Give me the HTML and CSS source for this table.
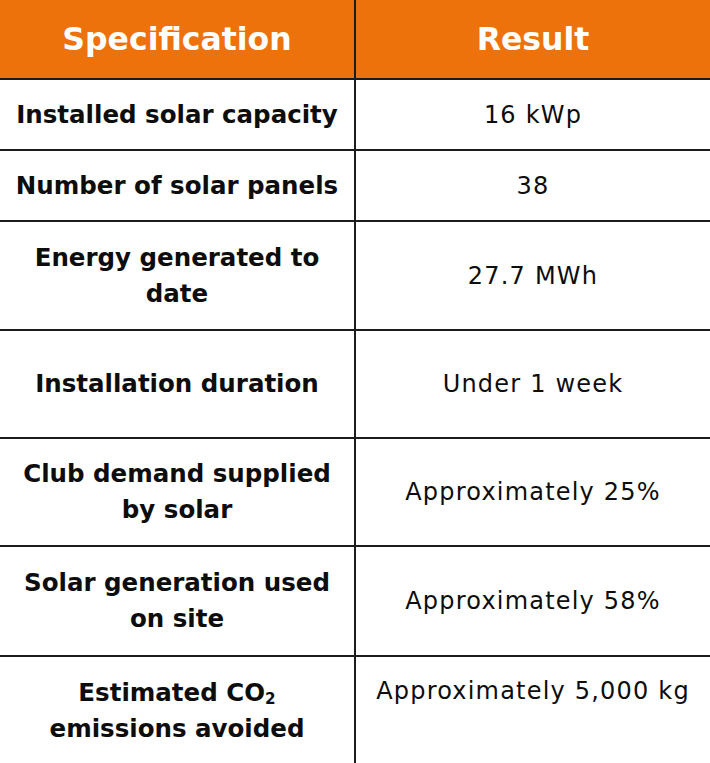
FILE: index.html
```html
<!DOCTYPE html>
<html lang="en">
<head>
<meta charset="utf-8">
<title>Solar results</title>
<link rel="stylesheet" href="styles.css">
</head>
<body>
<table class="spec-table">
  <colgroup><col class="col-spec"><col class="col-result"></colgroup>
  <thead>
    <tr class="row-head">
      <th>Specification</th>
      <th>Result</th>
    </tr>
  </thead>
  <tbody>
    <tr class="row-short">
      <td class="spec">Installed solar capacity</td>
      <td class="result">16 kWp</td>
    </tr>
    <tr class="row-short">
      <td class="spec">Number of solar panels</td>
      <td class="result">38</td>
    </tr>
    <tr class="row-tall row-tall-plus">
      <td class="spec">Energy generated to date</td>
      <td class="result">27.7 MWh</td>
    </tr>
    <tr class="row-tall">
      <td class="spec">Installation duration</td>
      <td class="result">Under 1 week</td>
    </tr>
    <tr class="row-tall">
      <td class="spec">Club demand supplied by solar</td>
      <td class="result">Approximately 25%</td>
    </tr>
    <tr class="row-tall row-tall-max">
      <td class="spec">Solar generation used on site</td>
      <td class="result">Approximately 58%</td>
    </tr>
    <tr class="row-tall">
      <td class="spec">Estimated CO<sub class="sub">2</sub> emissions avoided</td>
      <td class="result result-top">Approximately 5,000 kg</td>
    </tr>
  </tbody>
</table>
</body>
</html>
```
FILE: styles.css
```css
html, body {
  margin: 0;
  padding: 0;
  background: #ffffff;
}

.spec-table {
  width: 710px;
  table-layout: fixed;
  border-collapse: collapse;
  font-family: "DejaVu Sans", sans-serif;
  color: #0d0d0d;
}

.col-spec { width: 355px; }
.col-result { width: 355px; }

.spec-table th,
.spec-table td {
  padding: 0 12px;
  text-align: center;
  vertical-align: middle;
  line-height: 36px;
}

.spec-table th + th,
.spec-table td + td {
  border-left: 2px solid #1c1c1c;
}

.spec-table tr + tr td,
.spec-table tbody tr:first-child td {
  border-top: 2px solid #1c1c1c;
}

.row-head th {
  height: 78px;
  background: #ee720b;
  color: #ffffff;
  font-size: 31.5px;
  font-weight: bold;
}

.row-short { height: 71px; }
.row-tall { height: 108px; }
.row-tall-plus { height: 109px; }
.row-tall-max { height: 110px; }

.spec {
  font-size: 24.5px;
  font-weight: bold;
}

.result {
  font-size: 24px;
  font-weight: normal;
  letter-spacing: 1.2px;
}

.spec-table .result-top {
  vertical-align: top;
  padding-top: 16px;
}

.sub {
  font-size: 0.62em;
  vertical-align: -0.2em;
  line-height: 0;
}
```
